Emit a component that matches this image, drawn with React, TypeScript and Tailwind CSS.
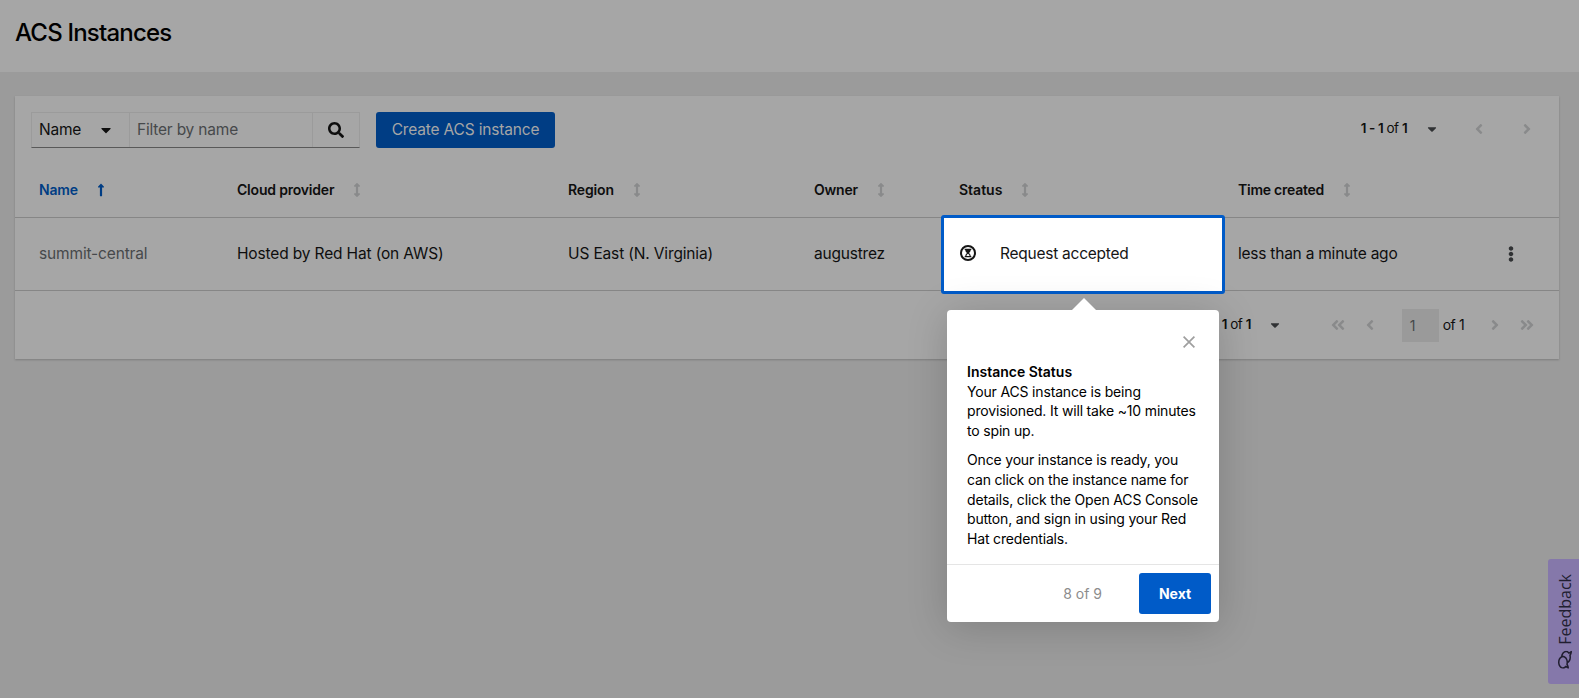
import React from "react";
import { FaSearch, FaCaretDown, FaAngleLeft, FaAngleRight, FaAngleDoubleLeft, FaAngleDoubleRight, FaEllipsisV, FaLongArrowAltUp, FaArrowsAltV, FaRegComments } from "react-icons/fa";

const columns = [
  { label: "Cloud provider", cls: "w-[331px]", track: "tracking-[-0.2px]" },
  { label: "Region", cls: "w-[246px]", track: "tracking-[-0.15px]" },
  { label: "Owner", cls: "w-[145px]", track: "tracking-[-0.2px]" },
  { label: "Status", cls: "w-[279px]", track: "tracking-[0px]" },
  { label: "Time created", cls: "flex-1", track: "tracking-[-0.25px]" },
];

function PageCount() {
  return (
    <span className="whitespace-nowrap pb-px text-[13.5px] tracking-[-0.7px] [word-spacing:0.6px]">
      <b className="font-semibold">1 - 1</b> of <b className="font-semibold">1</b>
    </span>
  );
}

function Tour() {
  return (
    <div className="absolute left-[947px] top-[310px] flex h-[312px] w-[272px] flex-col rounded-[4px] bg-white text-black shadow-[0_5px_40px_rgba(0,0,0,0.18)]">
      <svg className="absolute left-[125px] top-[-12px]" width="24" height="12" viewBox="0 0 24 12">
        <path d="M0 12L12 0L24 12Z" fill="#fff" />
      </svg>
      <svg className="absolute left-[236px] top-[26px]" width="12" height="12" viewBox="0 0 12 12">
        <path d="M.6 .6L11.4 11.4M11.4 .6L.6 11.4" stroke="#9f9f9f" strokeWidth="1.7" />
      </svg>
      <div className="flex-1 whitespace-nowrap px-5 pt-[52px] text-[14px] leading-[19.6px] tracking-[-0.17px]">
        <p className="font-semibold tracking-normal">Instance Status</p>
        <p>Your ACS instance is being<br />provisioned. It will take ~10 minutes<br />to spin up.</p>
        <p className="mt-[10px]">Once your instance is ready, you<br />can click on the instance name for<br />details, click the Open ACS Console<br />button, and sign in using your Red<br />Hat credentials.</p>
      </div>
      <div className="flex h-[58px] items-center justify-end border-t border-[#e5e5e5] pr-2">
        <span className="mr-[37px] text-[14px] text-[#8c8c8c]">8 of 9</span>
        <button className="h-[41px] w-[72px] rounded-[3px] bg-[#005bc8] text-[14px] font-bold text-white">Next</button>
      </div>
    </div>
  );
}

export default function App() {
  return (
    <div className="relative flex h-[698px] w-[1579px] flex-col overflow-hidden bg-[#9b9b9b] font-[Inter,sans-serif] text-[#0e0e0e]">
      <header className="h-[72px] bg-[#a6a6a6] pl-[15px] pt-[15px]">
        <h1 className="text-2xl font-medium leading-9 tracking-[-0.8px] text-black">ACS Instances</h1>
      </header>
      <main className="ml-[15px] mt-6 flex h-[263px] w-[1544px] flex-col bg-[#a6a6a6] shadow-[0_1px_2px_rgba(0,0,0,0.2)]">
        <div className="flex h-[68px] items-center px-4">
          <div className="flex h-9 w-[329px] border border-[#9b9b9b] border-b-[#595959] text-[15.5px]">
            <div className="flex w-[98px] items-center justify-between border-r border-[#9b9b9b] pl-[7px] pr-[15px]">
              <span className="pb-px tracking-[-0.2px]">Name</span>
              <FaCaretDown size={16} />
            </div>
            <div className="flex flex-1 items-center border-r border-[#9b9b9b] pb-px pl-[7px] tracking-[-0.2px] text-[#46494b]">Filter by name</div>
            <div className="flex w-[46px] items-center justify-center"><FaSearch size={16} /></div>
          </div>
          <button className="ml-4 h-9 w-[179px] rounded-[3px] bg-[#003d84] pb-px text-[15.5px] tracking-[-0.17px] text-[#a6a6a6]">Create ACS instance</button>
          <div className="ml-auto flex items-center pb-0.5">
            <PageCount />
            <FaCaretDown size={14} className="ml-[18px] text-[#303234]" />
            <FaAngleLeft size={16} className="ml-8 text-[#898a8b]" />
            <FaAngleRight size={16} className="ml-8 mr-2 text-[#898a8b]" />
          </div>
        </div>
        <div className="flex h-[54px] items-center border-b border-[#868686] pb-px pl-6 text-sm font-semibold">
          <div className="flex w-[198px] items-center gap-4 tracking-[-0.2px] text-[#003d84]">Name<FaLongArrowAltUp size={14} /></div>
          {columns.map((c) => (
            <div key={c.label} className={"flex items-center gap-4 " + c.cls}>
              <span className={c.track}>{c.label}</span>
              <FaArrowsAltV size={14} className="text-[#898a8b]" />
            </div>
          ))}
        </div>
        <div className="flex h-[73px] items-center border-b border-[#868686] pb-px pl-6 text-[15.5px] tracking-[-0.15px]">
          <span className="w-[198px] text-[#46494b]">summit-central</span>
          <span className="w-[331px]">Hosted by Red Hat (on AWS)</span>
          <span className="w-[246px]">US East (N. Virginia)</span>
          <span className="w-[424px] tracking-[-0.2px]">augustrez</span>
          <span className="flex-1 tracking-[-0.23px]">less than a minute ago</span>
          <FaEllipsisV size={16} className="mr-10 text-[#303234]" />
        </div>
        <div className="flex flex-1 items-center justify-end pr-6 text-sm">
          <PageCount />
          <FaCaretDown size={14} className="ml-[17px] text-[#303234]" />
          <FaAngleDoubleLeft size={16} className="ml-12 text-[#898a8b]" />
          <FaAngleLeft size={16} className="ml-4 text-[#898a8b]" />
          <div className="ml-6 h-[33px] w-[37px] bg-[#9a9a9a] pl-2 leading-[33px] text-[#46494b]">1</div>
          <span className="ml-1 tracking-[-0.7px] [word-spacing:0.8px]">of 1</span>
          <FaAngleRight size={16} className="ml-[23px] text-[#898a8b]" />
          <FaAngleDoubleRight size={16} className="ml-4 text-[#898a8b]" />
        </div>
      </main>
      <div className="absolute left-[941px] top-[215px] flex h-[79px] w-[284px] items-center rounded-[3px] border-[3px] border-[#005bc8] bg-white pb-[3px] pl-4 text-[15.5px] tracking-[-0.25px] text-[#151515]">
        <svg width="16" height="16" viewBox="0 0 16 16">
          <circle cx="8" cy="8" r="7" fill="none" stroke="#151515" strokeWidth="2" />
          <path d="M4.7 3.7H11.3V4.9H10.7C10.7 6.4 9.8 7.3 8.9 8C9.8 8.7 10.7 9.6 10.7 11.1H11.3V12.3H4.7V11.1H5.3C5.3 9.6 6.2 8.7 7.1 8C6.2 7.3 5.3 6.4 5.3 4.9H4.7Z" fill="#151515" />
          <path d="M6.4 10.9C6.6 9.9 7.3 9.3 8 8.8C8.7 9.3 9.4 9.9 9.6 10.9Z" fill="#fff" />
        </svg>
        <span className="ml-6 pt-0.5">Request accepted</span>
      </div>
      <Tour />
      <div className="absolute left-[1548px] top-[559px] flex h-[125px] w-[31px] items-center justify-center rounded-l-[3px] bg-[#8578aa] pl-0.5">
        <div className="flex rotate-180 items-center gap-1.5 pt-px font-['Open_Sans',sans-serif] text-[16px] font-medium leading-[20px] text-[#211e30] [writing-mode:vertical-rl]">
          <FaRegComments size={18} className="rotate-90" />
          <span>Feedback</span>
        </div>
      </div>
    </div>
  );
}
